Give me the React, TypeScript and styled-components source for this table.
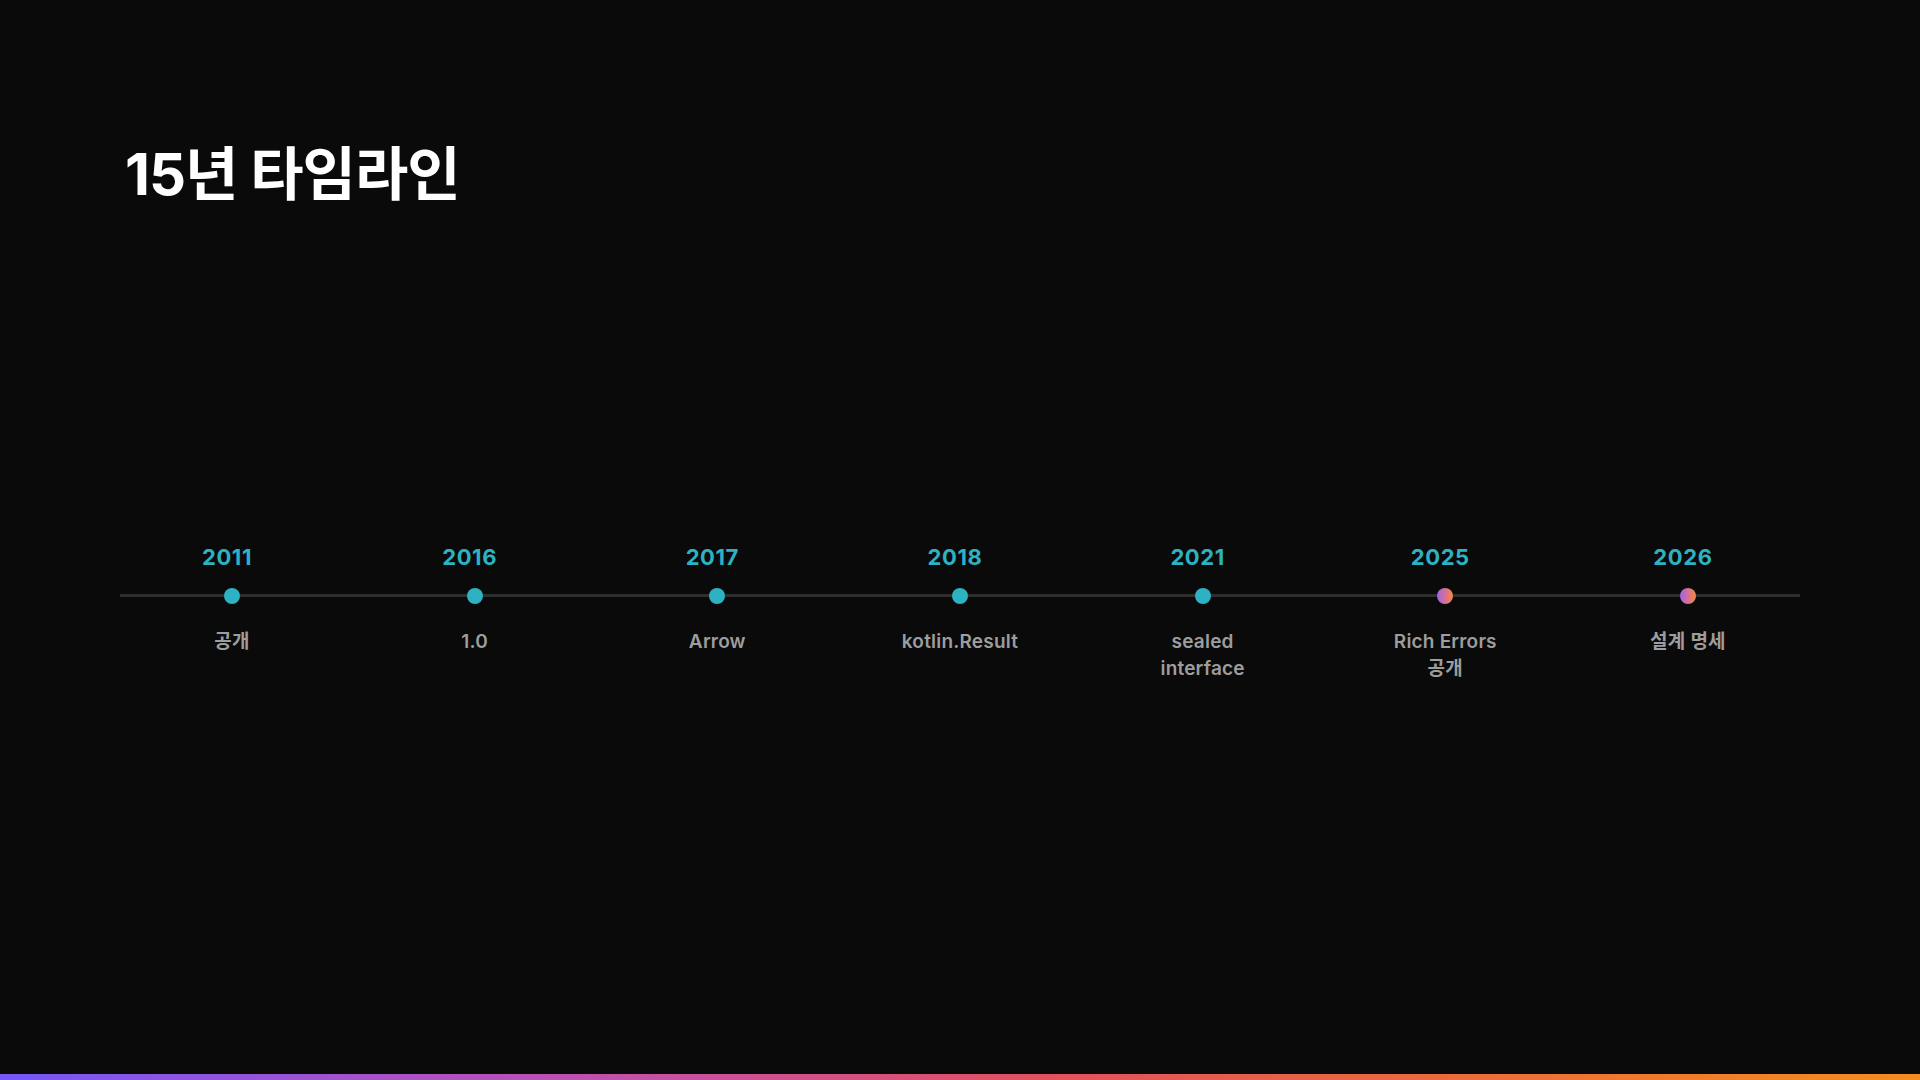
import React from 'react';
import styled, { createGlobalStyle, css } from 'styled-components';

const GlobalStyle = createGlobalStyle`
  html, body {
    margin: 0;
    padding: 0;
    background: #0a0a0a;
  }
  * {
    box-sizing: border-box;
  }
`;

const FONT = `Inter, "Noto Sans CJK KR", "Noto Sans", sans-serif`;

const Slide = styled.div`
  width: 1920px;
  height: 1080px;
  display: flex;
  flex-direction: column;
  background: #0a0a0a;
  font-family: ${FONT};
  overflow: hidden;
`;

const Content = styled.main`
  flex: 1;
  display: flex;
  flex-direction: column;
  padding: 140px 120px 0;
`;

const Title = styled.h1`
  margin: 0 0 0 5px;
  font-size: 58px;
  line-height: 1.2;
  font-weight: 700;
  letter-spacing: -1px;
  color: #ffffff;
`;

const Timeline = styled.ol`
  position: relative;
  margin: 334px 0 0;
  padding: 0;
  list-style: none;
  display: flex;
  justify-content: space-between;
  align-items: flex-start;

  // track line under the dots
  &::before {
    content: '';
    position: absolute;
    left: 0;
    right: 0;
    top: 50.5px;
    height: 3px;
    background: #2e2e2e;
  }
`;

const Item = styled.li`
  position: relative;
  width: 224px;
  display: flex;
  flex-direction: column;
  align-items: center;
`;

const Year = styled.span`
  margin-right: 10px;
  font-size: 22px;
  line-height: 26px;
  font-weight: 700;
  letter-spacing: 0.6px;
  color: #2db2c3;
`;

const Dot = styled.span<{ $future?: boolean }>`
  margin-top: 18px;
  width: 16px;
  height: 16px;
  border-radius: 50%;
  background: #2db2c3;
  ${(p) =>
    p.$future &&
    css`
      background: linear-gradient(90deg, #9a66e6 0%, #d86f9a 50%, #f38a3c 100%);
    `}
`;

const Label = styled.span`
  margin-top: 24px;
  font-size: 19px;
  line-height: 27px;
  font-weight: 600;
  letter-spacing: 0.2px;
  color: #9d9d9d;
  text-align: center;
  white-space: nowrap;
`;

const AccentBar = styled.div`
  height: 6px;
  flex-shrink: 0;
  background: linear-gradient(90deg, #7656fb 0%, #c050b0 30%, #e5505e 55%, #ec6a3a 75%, #f58d1c 100%);
`;

type Milestone = {
  year: string;
  lines: string[];
  future?: boolean;
};

const milestones: Milestone[] = [
  { year: '2011', lines: ['공개'] },
  { year: '2016', lines: ['1.0'] },
  { year: '2017', lines: ['Arrow'] },
  { year: '2018', lines: ['kotlin.Result'] },
  { year: '2021', lines: ['sealed', 'interface'] },
  { year: '2025', lines: ['Rich Errors', '공개'], future: true },
  { year: '2026', lines: ['설계 명세'], future: true },
];

const App = () => {
  return (
    <>
      <GlobalStyle />
      <Slide>
        <Content>
          <Title>15년 타임라인</Title>
          <Timeline>
            {milestones.map((m) => (
              <Item key={m.year}>
                <Year>{m.year}</Year>
                <Dot $future={m.future} />
                <Label>
                  {m.lines.map((line, i) => (
                    <React.Fragment key={line}>
                      {i > 0 && <br />}
                      {line}
                    </React.Fragment>
                  ))}
                </Label>
              </Item>
            ))}
          </Timeline>
        </Content>
        <AccentBar />
      </Slide>
    </>
  );
};

export default App;
